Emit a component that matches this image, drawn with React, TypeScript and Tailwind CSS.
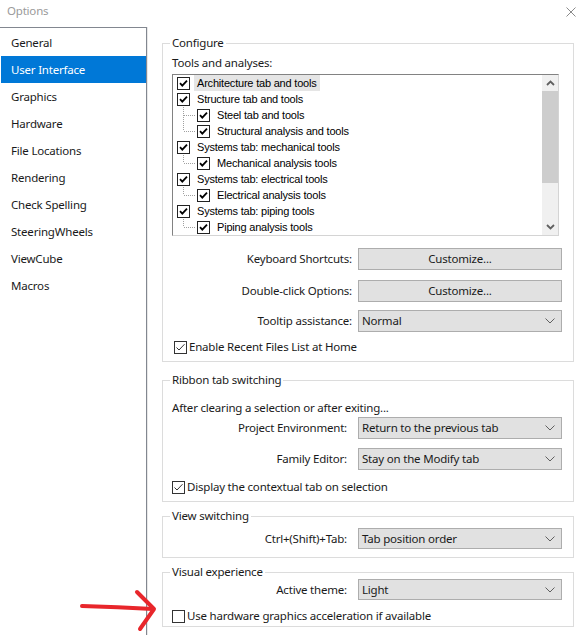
import React from "react";

const ui = "font-['Noto_Sans',sans-serif] tracking-[-0.2px]";
const ls = "font-['Liberation_Sans',Arial,sans-serif]";
const fs = "text-[11.5px]";

function ListCheck() {
  return (
    <svg width="13" height="13" className="shrink-0">
      <rect x="0.5" y="0.5" width="12" height="12" fill="#fff" stroke="#222" />
      <path d="M3 6.2 L5.3 8.6 L10 3.6" fill="none" stroke="#000" strokeWidth="1.8" />
    </svg>
  );
}

function WinCheck({ checked }: { checked: boolean }) {
  return (
    <svg width="13" height="13" className="shrink-0">
      <rect x="0.5" y="0.5" width="12" height="12" fill="#fff" stroke="#333" />
      {checked && <path d="M2.5 6.5 L5 9 L10.5 3.2" fill="none" stroke="#333" strokeWidth="1" />}
    </svg>
  );
}

function Tree({ last }: { last: boolean }) {
  return (
    <svg width="20" height="16" className="shrink-0">
      <line x1="6.5" y1="0" x2="6.5" y2={last ? 8 : 16} stroke="#a0a0a0" strokeDasharray="1 1" />
      <line x1="7" y1="8.5" x2="18" y2="8.5" stroke="#a0a0a0" strokeDasharray="1 1" />
    </svg>
  );
}

function Chevron() {
  return (
    <svg width="10" height="6" className="shrink-0">
      <path d="M0.5 0.5 L5 5 L9.5 0.5" fill="none" stroke="#606060" strokeWidth="1" />
    </svg>
  );
}

function Select({ value, h = "h-[22px]" }: { value: string; h?: string }) {
  return (
    <div className={`w-[204px] ${h} shrink-0 bg-[#e1e1e1] border border-[#adadad] flex items-center pl-[3px] pr-[6px] ${fs} text-[#1a1a1a] ${ui}`}>
      <span className="flex-1">{value}</span>
      <Chevron />
    </div>
  );
}

function Button({ label }: { label: string }) {
  return (
    <div className={`w-[204px] h-[22px] shrink-0 bg-[#e1e1e1] border border-[#adadad] flex items-center justify-center ${fs} text-[#1a1a1a] ${ui}`}>
      {label}
    </div>
  );
}

function Row({ label, children, pr = "pr-[6px]", className = "" }: { label: string; children: React.ReactNode; pr?: string; className?: string }) {
  return (
    <div className={`flex items-center ${className}`}>
      <div className={`flex-1 text-right ${fs} text-[#1a1a1a] ${pr} ${ui}`}>{label}</div>
      {children}
    </div>
  );
}

function CheckRow({ label, checked, className = "" }: { label: string; checked: boolean; className?: string }) {
  return (
    <div className={`flex items-center h-[16px] gap-[2px] ${fs} text-[#1a1a1a] ${ui} ${className}`}>
      <WinCheck checked={checked} />
      <span>{label}</span>
    </div>
  );
}

function Group({ title, children, className = "" }: { title: string; children: React.ReactNode; className?: string }) {
  return (
    <fieldset className={`border border-[#dcdcdc] ${className}`}>
      <legend className={`ml-[7px] px-[2px] h-[16px] leading-[16px] ${fs} text-[#1a1a1a] ${ui}`}>{title}</legend>
      {children}
    </fieldset>
  );
}

const navItems = [
  "General",
  "User Interface",
  "Graphics",
  "Hardware",
  "File Locations",
  "Rendering",
  "Check Spelling",
  "SteeringWheels",
  "ViewCube",
  "Macros",
];

type Item = { label: string; children?: string[] };
const items: Item[] = [
  { label: "Architecture tab and tools" },
  { label: "Structure tab and tools", children: ["Steel tab and tools", "Structural analysis and tools"] },
  { label: "Systems tab: mechanical tools", children: ["Mechanical analysis tools"] },
  { label: "Systems tab: electrical tools", children: ["Electrical analysis tools"] },
  { label: "Systems tab: piping tools", children: ["Piping analysis tools"] },
];

function ListBox() {
  const rows: React.ReactNode[] = [];
  items.forEach((it, i) => {
    rows.push(
      <div key={`p${i}`} className="flex items-center h-[16px] pl-[4px]">
        <ListCheck />
        <span className={`ml-[4px] pl-[3px] pr-[3px] h-[16px] leading-[17px] ${i === 0 ? "bg-[#e5e5e5]" : ""}`}>{it.label}</span>
      </div>
    );
    (it.children || []).forEach((c, j, arr) => {
      rows.push(
        <div key={`c${i}-${j}`} className="flex items-center h-[16px] pl-[4px]">
          <Tree last={j === arr.length - 1} />
          <ListCheck />
          <span className="ml-[4px] pl-[3px] h-[16px] leading-[17px]">{c}</span>
        </div>
      );
    });
  });
  return (
    <div className={`mt-[3px] ml-[9px] mr-[14px] h-[162px] border-t border-l border-t-[#828282] border-l-[#828282] border-r border-b border-r-[#d4d4d4] border-b-[#d4d4d4] bg-white flex text-[11px] text-[#000] ${ls}`}>
      <div className="flex-1 flex flex-col">{rows}</div>
      <div className="w-[16px] bg-[#f0f0f0] flex flex-col">
        <div className="h-[16px] flex items-center justify-center">
          <svg width="9" height="6"><path d="M1 5 L4.5 1.5 L8 5" fill="none" stroke="#606060" strokeWidth="1.8" /></svg>
        </div>
        <div className="h-[92px] bg-[#cdcdcd]" />
        <div className="flex-1" />
        <div className="h-[16px] flex items-center justify-center">
          <svg width="9" height="6"><path d="M1 1 L4.5 4.5 L8 1" fill="none" stroke="#606060" strokeWidth="1.8" /></svg>
        </div>
      </div>
    </div>
  );
}

export default function App() {
  return (
    <div className={`relative w-[581px] h-[635px] bg-white overflow-hidden ${ui}`}>
      {/* title bar */}
      <div className="h-[27px] flex items-start">
        <div className={`pl-[7px] pt-[2px] ${fs} leading-[18px] text-[#9a9a9a] flex-1`}>Options</div>
        <div className="pt-[7px] pr-[5px]">
          <svg width="10" height="10"><path d="M0.5 0.5 L9.5 9.5 M9.5 0.5 L0.5 9.5" stroke="#8a8a8a" strokeWidth="1" /></svg>
        </div>
      </div>
      <div className="flex h-[608px]">
        {/* nav */}
        <div className="w-[147px] border-t border-r border-[#828790] pt-[1px] pl-[1px] shrink-0">
          {navItems.map((n, i) => (
            <div
              key={n}
              className={`h-[27px] flex items-center pl-[10px] pt-[1px] ${fs} ${i === 1 ? "bg-[#0078d7] text-white" : "text-[#1a1a1a]"}`}
            >
              {n}
            </div>
          ))}
        </div>
        <div className="w-[1px] bg-[#e8e8e8]" />
        {/* content */}
        <div className="flex-1 pl-[14px] pr-[7px] pt-[8px] flex flex-col">
          <Group title="Configure" className="pb-[6px]">
            <div className={`mt-[4px] pl-[9px] h-[16px] flex items-center ${fs} text-[#1a1a1a]`}>Tools and analyses:</div>
            <ListBox />
            <div className="pr-[11px]">
              <Row label="Keyboard Shortcuts:" className="mt-[12px]">
                <Button label="Customize..." />
              </Row>
              <Row label="Double-click Options:" className="mt-[10px]">
                <Button label="Customize..." />
              </Row>
              <Row label="Tooltip assistance:" className="mt-[8px]">
                <Select value="Normal" />
              </Row>
            </div>
            <CheckRow label="Enable Recent Files List at Home" checked className="mt-[7px] ml-[11px]" />
          </Group>

          <Group title="Ribbon tab switching" className="mt-[10px] pb-[6px]">
            <div className={`mt-[12px] pl-[9px] h-[16px] flex items-center ${fs} text-[#1a1a1a]`}>
              After clearing a selection or after exiting...
            </div>
            <div className="pr-[11px]">
              <Row label="Project Environment:" pr="pr-[11px]" className="mt-[1px]">
                <Select value="Return to the previous tab" />
              </Row>
              <Row label="Family Editor:" pr="pr-[11px]" className="mt-[9px]">
                <Select value="Stay on the Modify tab" />
              </Row>
            </div>
            <CheckRow label="Display the contextual tab on selection" checked className="mt-[9px] ml-[9px]" />
          </Group>

          <Group title="View switching" className="mt-[6px] pb-[8px]">
            <div className="pr-[11px]">
              <Row label="Ctrl+(Shift)+Tab:" pr="pr-[11px]" className="mt-[4px]">
                <Select value="Tab position order" h="h-[21px]" />
              </Row>
            </div>
          </Group>

          <Group title="Visual experience" className="mt-[6px] pb-[2px]">
            <div className="pr-[11px]">
              <Row label="Active theme:" pr="pr-[11px]" className="-mt-[1px]">
                <Select value="Light" h="h-[21px]" />
              </Row>
            </div>
            <CheckRow label="Use hardware graphics acceleration if available" checked={false} className="mt-[8px] ml-[9px]" />
          </Group>
        </div>
      </div>

      {/* red annotation arrow */}
      <svg className="absolute left-0 top-0 pointer-events-none" width="581" height="635">
        <path d="M82 606 Q118 607 153 609" fill="none" stroke="#e8262b" strokeWidth="4" strokeLinecap="round" />
        <path d="M137 592 L154 609 L140 629" fill="none" stroke="#e8262b" strokeWidth="4" strokeLinecap="round" strokeLinejoin="round" />
      </svg>
    </div>
  );
}
